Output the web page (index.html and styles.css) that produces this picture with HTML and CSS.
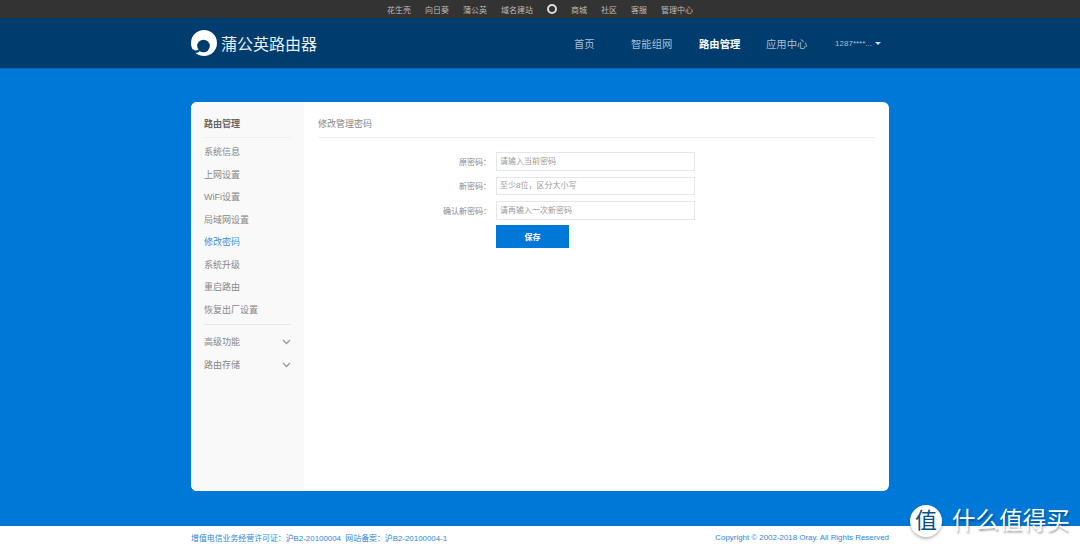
FILE: index.html
```html
<!DOCTYPE html>
<html lang="zh-CN">
<head>
    <meta charset="UTF-8">
    <title>蒲公英路由器</title>
    <link rel="stylesheet" href="styles.css">
</head>
<body>
    <div class="topbar">
        <a>花生壳</a>
        <a>向日葵</a>
        <a>蒲公英</a>
        <a>域名建站</a>
        <span class="ring"></span>
        <a>商城</a>
        <a>社区</a>
        <a>客服</a>
        <a>管理中心</a>
    </div>

    <div class="header">
        <div class="wrap header-inner">
            <div class="logo">
                <svg width="26" height="26" viewBox="0 0 26 26">
                    <circle cx="13" cy="13" r="13" fill="#fff"/>
                    <circle cx="12.500" cy="16" r="6.300" fill="#003c6e"/>
                    <path d="M8 20.500C6 22 3.500 22 1.500 20" fill="none" stroke="#003c6e" stroke-width="2.400"/>
                </svg>
                <span>蒲公英路由器</span>
            </div>
            <div class="nav">
                <a class="nav-home">首页</a>
                <a class="nav-net">智能组网</a>
                <a class="nav-router active">路由管理</a>
                <a class="nav-app">应用中心</a>
                <a class="user">1287****... <i class="caret"></i></a>
            </div>
        </div>
    </div>

    <div class="main">
        <div class="card">
            <div class="sidebar">
                <h3>路由管理</h3>
                <ul class="menu">
                    <li>系统信息</li>
                    <li>上网设置</li>
                    <li>WiFi设置</li>
                    <li>局域网设置</li>
                    <li class="current">修改密码</li>
                    <li>系统升级</li>
                    <li>重启路由</li>
                    <li>恢复出厂设置</li>
                </ul>
                <ul class="menu menu-more">
                    <li>高级功能
                        <svg width="9" height="6" viewBox="0 0 9 6"><path d="M1 1l3.500 3.500L8 1" fill="none" stroke="#999" stroke-width="1.300"/></svg>
                    </li>
                    <li>路由存储
                        <svg width="9" height="6" viewBox="0 0 9 6"><path d="M1 1l3.500 3.500L8 1" fill="none" stroke="#999" stroke-width="1.300"/></svg>
                    </li>
                </ul>
            </div>
            <div class="content">
                <h4>修改管理密码</h4>
                <div class="form">
                    <div class="form-row">
                        <label>原密码：</label>
                        <input type="text" placeholder="请输入当前密码">
                    </div>
                    <div class="form-row">
                        <label>新密码：</label>
                        <input type="text" placeholder="至少8位，区分大小写">
                    </div>
                    <div class="form-row">
                        <label>确认新密码：</label>
                        <input type="text" placeholder="请再输入一次新密码">
                    </div>
                    <div class="form-row">
                        <label></label>
                        <button class="save-btn">保存</button>
                    </div>
                </div>
            </div>
        </div>
    </div>

    <div class="footer">
        <div class="wrap footer-inner">
            <span>增值电信业务经营许可证：沪B2-20100004&nbsp;&nbsp;网站备案：沪B2-20100004-1</span>
            <span>Copyright © 2002-2018 Oray. All Rights Reserved</span>
        </div>
    </div>

    <!-- watermark over the corner of the shot -->
    <div class="watermark">
        <span class="wm-badge">值</span>
        <span class="wm-text">什么值得买</span>
    </div>
</body>
</html>
```

FILE: styles.css
```css
* {
    box-sizing: border-box;
}

html, body {
    height: 100%;
}

body {
    margin: 0;
    height: 548px;
    overflow: hidden;
    display: flex;
    flex-direction: column;
    position: relative;
    font-family: "Liberation Sans", "Noto Sans CJK SC", sans-serif;
    background-color: #0078d7;
}

.wrap {
    width: 698px;
    margin: 0 auto;
}

.topbar {
    height: 18px;
    background: #333;
    display: flex;
    justify-content: center;
    align-items: center;
    gap: 14px;
    font-size: 8px;
    color: #bbb;
}

.ring {
    width: 10px;
    height: 10px;
    border: 2px solid #ddd;
    border-radius: 50%;
}

.header {
    height: 51px;
    background: #003c6e;
    border-bottom: 1px solid #0066b8;
}

.header-inner {
    height: 50px;
    display: flex;
    align-items: center;
    justify-content: space-between;
}

.logo {
    display: flex;
    align-items: center;
    gap: 4px;
    color: #e6edf3;
    font-size: 16px;
}

.nav {
    display: flex;
    align-items: center;
    font-size: 10.300px;
    color: #a9bfd2;
    margin-right: 8px;
}

.nav a {
    white-space: nowrap;
}

.nav-home { width: 57px; }
.nav-net { width: 68px; }
.nav-router { width: 67px; }
.nav-app { width: 69px; }

.nav .active {
    color: #fff;
    font-weight: bold;
}

.user {
    font-size: 8px;
    display: flex;
    align-items: center;
    gap: 3px;
}

.caret {
    width: 0;
    height: 0;
    border-left: 3px solid transparent;
    border-right: 3px solid transparent;
    border-top: 3px solid #ddd;
}

.main {
    flex: 1;
    padding-top: 33px;
}

.card {
    width: 698px;
    height: 389px;
    margin: 0 auto;
    display: flex;
    background: #fff;
    border-radius: 6px;
    overflow: hidden;
}

.sidebar {
    width: 113px;
    background: #f9f9f9;
    padding: 0 13px;
}

.sidebar h3 {
    margin: 0;
    height: 36px;
    line-height: 44px;
    font-size: 9px;
    font-weight: bold;
    color: #666;
    border-bottom: 1px solid #eee;
}

.menu {
    list-style: none;
    margin: 0;
    padding: 3px 0 3px;
    font-size: 9px;
    color: #888;
}

.menu li {
    height: 22.500px;
    line-height: 22.500px;
    display: flex;
    align-items: center;
    justify-content: space-between;
}

.menu .current {
    color: #3d8fdc;
}

.menu-more {
    padding-top: 6px;
    border-top: 1px solid #e8e8e8;
}

.content {
    flex: 1;
    padding: 0 14px;
}

.content h4 {
    margin: 0;
    height: 36px;
    line-height: 44px;
    font-size: 9px;
    font-weight: normal;
    color: #888;
    border-bottom: 1px solid #eee;
}

.form {
    padding-top: 14px;
}

.form-row {
    display: flex;
    align-items: center;
    margin-bottom: 6px;
}

.form-row label {
    width: 178px;
    padding-right: 5px;
    text-align: right;
    font-size: 8px;
    color: #888;
}

.form-row input {
    width: 199px;
    height: 18.500px;
    padding: 0 3px;
    border: 1px solid #e6e6e6;
    font-family: inherit;
    font-size: 8px;
    outline: none;
}

.form-row input::placeholder {
    color: #999;
}

.save-btn {
    width: 73px;
    height: 23px;
    margin-top: -1px;
    border: none;
    background: #0078d7;
    color: #fff;
    font-family: inherit;
    font-size: 8px;
    font-weight: bold;
}

.footer {
    height: 22px;
    background: #fff;
}

.footer-inner {
    height: 22px;
    display: flex;
    align-items: center;
    justify-content: space-between;
    font-size: 7.900px;
    color: #2f86d8;
}

.watermark {
    position: absolute;
    left: 910px;
    top: 505px;
    display: flex;
    align-items: center;
    gap: 10px;
}

.wm-badge {
    width: 32px;
    height: 32px;
    border-radius: 50%;
    background: #fff;
    color: #0c4f8a;
    font-size: 22px;
    line-height: 32px;
    text-align: center;
    box-shadow: 0 2px 3px rgba(0, 0, 0, 0.25);
}

.wm-text {
    font-size: 23.600px;
    line-height: 32px;
    color: #fff;
    text-shadow: 1px 2px 2px rgba(0, 0, 0, 0.35);
    white-space: nowrap;
}
```
